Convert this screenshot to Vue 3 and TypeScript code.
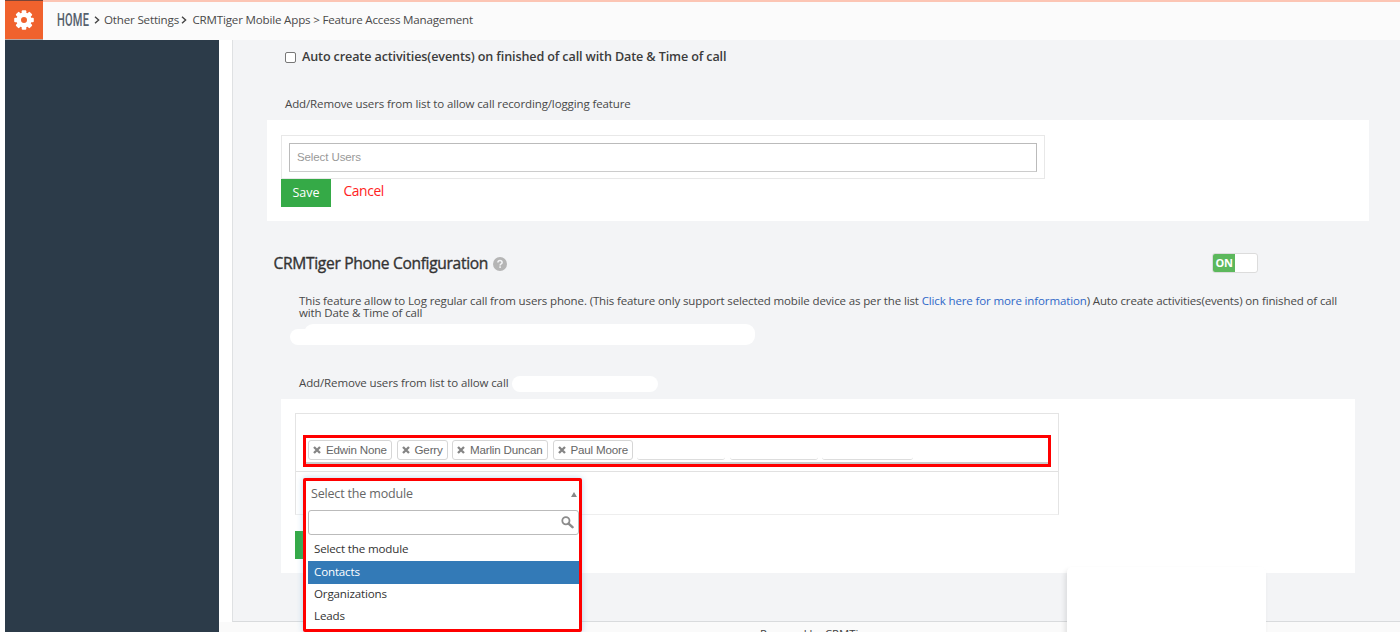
<script setup lang="ts">
import { ref } from 'vue'

const users = ref<{ name: string; width: number }[]>([
  { name: 'Edwin None', width: 84 },
  { name: 'Gerry', width: 51 },
  { name: 'Marlin Duncan', width: 96 },
  { name: 'Paul Moore', width: 80 },
])
const blanks = [88, 88, 91]
const modules = ['Select the module', 'Contacts', 'Organizations', 'Leads']
const active = ref('Contacts')
const autoCreate = ref(false)
const teeth = [0, 45, 90, 135, 180, 225, 270, 315]
</script>

<template>
  <div class="page">
    <header class="topbar">
      <div class="gear">
        <svg width="20" height="20" viewBox="0 0 20 20">
          <g fill="#fff">
            <rect v-for="a in teeth" :key="a" x="7.7" y="0.2" width="4.6" height="6" rx="1" :transform="`rotate(${a} 10 10)`" />
          </g>
          <circle cx="10" cy="10" r="5.3" fill="none" stroke="#fff" stroke-width="4.6" />
        </svg>
      </div>
      <nav class="crumbs">
        <span class="home"><span class="home-text">HOME</span></span>
        <svg class="chev c1" width="6" height="8" viewBox="0 0 6 8"><path d="M1 .8 4.6 4 1 7.2" /></svg>
        <span class="crumb s1">Other Settings</span>
        <svg class="chev c2" width="6" height="8" viewBox="0 0 6 8"><path d="M1 .8 4.6 4 1 7.2" /></svg>
        <span class="crumb s2">CRMTiger Mobile Apps &gt; Feature Access Management</span>
      </nav>
    </header>

    <div class="body">
      <aside class="sidebar"></aside>
      <div class="right">
        <main class="content">
          <label class="check-row">
            <input v-model="autoCreate" type="checkbox" class="check" />
            <span class="check-label">Auto create activities(events) on finished of call with Date &amp; Time of call</span>
          </label>
          <div class="hint first"><span class="h1t">Add/Remove users from list to allow call recording/logging feature</span></div>

          <section class="panel one">
            <div class="frame"><div class="field">Select Users</div></div>
            <div class="actions">
              <button class="save">Save</button>
              <a class="cancel">Cancel</a>
            </div>
          </section>

          <div class="title-row">
            <h2>CRMTiger Phone Configuration</h2>
            <svg class="help" width="14" height="14" viewBox="0 0 14 14">
              <circle cx="7" cy="7" r="7" fill="#b5b5b5" />
              <path d="M4.9 5.5Q5 3.6 7 3.6T9.1 5.4Q9.1 6.3 8.1 6.9T7.1 8.4" fill="none" stroke="#f3f4f6" stroke-width="1.5" />
              <rect x="6.3" y="9.3" width="1.6" height="1.6" fill="#f3f4f6" />
            </svg>
            <div class="toggle"><span class="on">ON</span></div>
          </div>

          <p class="desc">
            <span class="d1">This feature allow to Log regular call from users phone. (This feature only support selected mobile device as per the list <a>Click here for more information</a>) Auto create activities(events) on finished of call</span>
            <span class="d2">with Date &amp; Time of call</span>
          </p>
          <div class="strip"><i class="strip-start"></i><i class="strip-main"></i></div>

          <div class="hint second"><span class="h2t">Add/Remove users from list to allow call</span><i class="pill"></i></div>

          <section class="panel two">
            <div class="table">
              <div class="cell users">
                <div class="picker">
                  <span v-for="u in users" :key="u.name" class="chip" :style="{ width: u.width + 'px' }">
                    <svg width="8" height="8" viewBox="0 0 8 8"><path d="M1 1 7 7M7 1 1 7" stroke="#858585" stroke-width="2.3" /></svg>
                    <span>{{ u.name }}</span>
                  </span>
                  <i v-for="(b, i) in blanks" :key="i" class="blank" :style="{ width: b + 'px' }"></i>
                </div>
              </div>
              <div class="cell modules">
                <div class="dropdown">
                  <div class="current">
                    <span>Select the module</span>
                    <svg width="6" height="5" viewBox="0 0 6 5"><path d="M3 0 6 5H0Z" fill="#888" /></svg>
                  </div>
                  <div class="search">
                    <svg width="13" height="13" viewBox="0 0 13 13" fill="none" stroke="#8c8c8c">
                      <circle cx="4.9" cy="4.8" r="3.6" stroke-width="1.8" />
                      <path d="M7.6 7.6 11.5 11.2" stroke-width="2.5" stroke-linecap="round" />
                    </svg>
                  </div>
                  <ul>
                    <li v-for="m in modules" :key="m" :class="{ active: m === active }" @click="active = m"><span>{{ m }}</span></li>
                  </ul>
                </div>
              </div>
            </div>
            <button class="save hidden-save"></button>
          </section>
        </main>
        <footer class="footer"><span>Powered by CRMTi</span></footer>
        <div class="card"></div>
      </div>
    </div>
  </div>
</template>

<style>
body { margin: 0; overflow: hidden; }
</style>

<style scoped>
* { box-sizing: border-box; }
.page {
  width: 1400px; height: 632px; overflow: hidden; background: #fff; padding-left: 5px;
  display: flex; flex-direction: column;
  font-family: "Open Sans", sans-serif; color: #484848; font-size: 11.5px;
}
.page span { white-space: nowrap; }
.topbar { height: 40px; flex: none; display: flex; background: #fbfbfb; border-top: 2px solid #fcc5b4; }
.gear {
  width: 38px; height: 40px; margin-top: -2px; background: #f0622d; border-top: 1px solid #7b4436;
  border-bottom: 1px solid #b9a7a4; display: flex; align-items: center; justify-content: center;
}
.gear svg { margin-right: 1px; }
.crumbs { display: flex; align-items: center; height: 36px; padding-left: 14px; color: #4a4a4a; }
.home { width: 33px; height: 20px; }
.home-text {
  display: inline-block; font: 500 17.5px/20px Roboto, sans-serif; color: #56616d;
  transform: scaleX(.63); transform-origin: 0 50%; letter-spacing: .3px;
}
.chev { fill: none; stroke: #444; stroke-width: 1.4; }
.c1 { margin: 0 4px 0 4px; }
.c2 { margin: 0 5.5px 0 1px; }
.crumb { font-size: 11.6px; line-height: 18px; }
.s1 { letter-spacing: -.18px; width: 76px; }
.s2 { letter-spacing: -.19px; }
.body { flex: 1; display: flex; min-height: 0; }
.sidebar { width: 214px; background: #2c3b49; flex: none; }
.right { flex: 1; min-width: 0; position: relative; display: flex; flex-direction: column; }
.content {
  height: 582px; flex: none; margin-left: 13px; padding-left: 34px; background: #f3f4f6;
  border-left: 1px solid #dfe1e3; border-bottom: 1px solid #d9dbdd;
}
.check-row { display: flex; align-items: center; height: 34px; padding-left: 18px; }
.check {
  appearance: none; width: 11px; height: 11px; margin: 0 6px 0 0; border: 1px solid #777;
  border-radius: 2px; background: #fff;
}
.check-label { font-size: 12.6px; font-weight: 600; color: #3c3c3c; letter-spacing: -.13px; line-height: 16px; }
.hint { display: flex; align-items: center; letter-spacing: -.12px; }
.first { height: 46px; padding: 13px 0 0 18px; }
.panel { background: #fff; }
.one { width: 1102px; height: 101px; padding: 15px 0 0 14px; }
.frame { width: 764px; height: 44px; border: 1px solid #e8e8e8; padding: 7px; }
.field {
  width: 748px; height: 29px; border: 1px solid #bbb; border-bottom-color: #ccc; padding-left: 7px;
  font: 11.5px/27px "Liberation Sans", Arial, sans-serif; color: #999; letter-spacing: -.1px;
}
.actions { display: flex; }
.save {
  width: 50px; height: 28px; padding: 0; border: 0; background: #35aa47; color: #fff;
  font: 12.5px/28px "Open Sans", sans-serif;
}
.cancel { margin-left: 12.5px; font-size: 13.8px; line-height: 24px; color: #f22; letter-spacing: -.38px; }
.title-row { display: flex; align-items: center; height: 40px; margin-top: 22px; padding-left: 6.5px; }
h2 {
  margin: 0; font-size: 15.6px; font-weight: 500; line-height: 20px; white-space: nowrap; width: 219px;
  color: #333; letter-spacing: -.33px; -webkit-text-stroke: .35px #333;
}
.help { margin-top: 2px; }
.toggle {
  width: 46px; height: 20px; margin-left: 705.5px; border: 1px solid #dcdcdc; border-radius: 3px;
  background: #fff; overflow: hidden;
}
.on {
  display: block; width: 22px; height: 18px; background: #5cb85c; color: #fff;
  font-size: 11px; font-weight: 700; line-height: 18px; text-align: center; letter-spacing: -.4px;
}
.desc { margin: 12px 0 0; padding-left: 32px; line-height: 12px; height: 25px; letter-spacing: -.127px; }
.desc span { display: block; }
.desc a { color: #3068c8; }
.strip { display: flex; align-items: flex-end; height: 21px; margin: 4px 0 0 23px; }
.strip-start { width: 28px; height: 16px; border-radius: 8px; background: #fff; }
.strip-main { width: 451px; height: 21px; margin-left: -14px; border-radius: 9px; background: #fff; }
.second { height: 16px; margin-top: 31px; padding-left: 32px; }
.h2t { width: 213px; margin-top: -3px; }
.pill { width: 146px; height: 16px; border-radius: 8px; background: #fff; }
.two { width: 1074px; height: 174px; margin: 7px 0 0 14px; padding: 14px 0 0 14px; }
.table { width: 764px; height: 102px; border: 1px solid #e4e4e4; border-bottom-color: #eee; }
.cell { padding-left: 7px; }
.users { height: 58px; padding-top: 21px; border-bottom: 1px solid #e1e1e1; }
.picker {
  width: 748px; height: 32px; border: 3px solid #f00; box-shadow: inset 0 -2px #ccc;
  display: flex; padding: 2px 0 0 2px; gap: 4.5px;
}
.chip {
  height: 20px; border: 1px solid #d6d6d6; border-radius: 3px; background: #fff;
  display: flex; align-items: center; gap: 5px; padding-left: 4px;
  font: 11.6px/18px "Liberation Sans", Arial, sans-serif; color: #666; letter-spacing: -.17px;
}
.blank { height: 20px; border-bottom: 1px solid #ddd; border-radius: 3px; }
.modules { padding-top: 6px; height: 42px; }
.dropdown {
  position: relative; z-index: 2; width: 279px; height: 154px; border: 3px solid #f00; border-radius: 2px;
  background: #fff; box-shadow: 0 0 6px rgba(90, 160, 220, .4);
}
.current {
  display: flex; align-items: center; justify-content: space-between; height: 26px;
  padding: 0 2px 0 5px; font-size: 12.5px; color: #666; letter-spacing: -.17px;
}
.current span { margin-top: -2px; }
.search {
  height: 25px; margin: 3px 0 0 2px; border: 1px solid #bbb; border-radius: 3px;
  display: flex; align-items: center; justify-content: flex-end; padding-right: 4px;
}
ul { list-style: none; margin: 4px 0 0 2px; padding: 0; }
li { height: 22.3px; padding-left: 6px; font-size: 11.6px; line-height: 20px; color: #333; letter-spacing: -.17px; }
.active { background: #337ab7; color: #fff; line-height: 22px; }
.hidden-save { display: block; margin-top: 16px; }
.footer { flex: 1; background: #fafafa; padding: 4px 0 0 541px; font-size: 11.3px; color: #444; }
.card {
  position: absolute; left: 848px; top: 527px; width: 199px; height: 80px; border-radius: 5px;
  background: #fff; box-shadow: -2px 3px 5px rgba(0, 0, 0, .1);
}
</style>
